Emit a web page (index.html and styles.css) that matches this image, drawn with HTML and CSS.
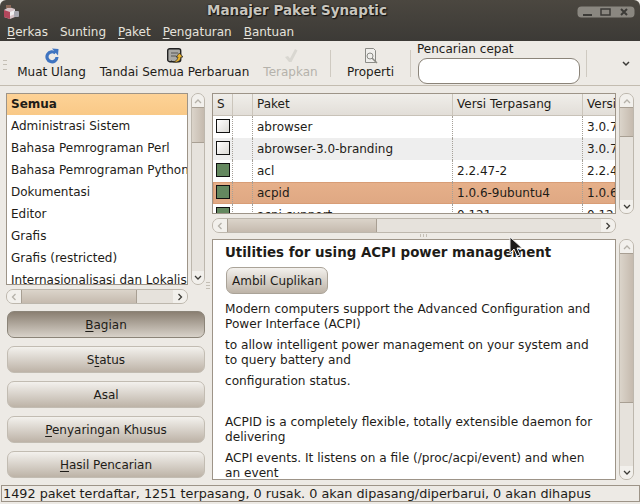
FILE: index.html
```html
<!DOCTYPE html>
<html lang="en">
<head>
<meta charset="UTF-8">
<meta name="viewport" content="width=device-width, initial-scale=1.0">
<title>Manajer Paket Synaptic</title>
<link rel="stylesheet" href="styles.css">
</head>
<body>
<header class="chrome">
  <div class="titlebar">
    <svg class="app-icon" width="16" height="14" viewBox="0 0 16 14">
      <path d="M1 5l5-3 6 2v8l-5 2-6-2z" fill="#d8c4c8"/>
      <path d="M1 5l6 2v7l-6-2z" fill="#b4475c"/>
      <path d="M7 7l5-2v4l-5 2z" fill="#f0eef0"/>
      <rect x="3" y="0" width="5" height="3" fill="#8d6a5a"/>
      <rect x="11" y="6" width="5" height="6" rx="1" fill="#a8a8b0"/>
    </svg>
    <h1 class="title">Manajer Paket Synaptic</h1>
    <div class="wm-buttons">
      <svg width="58" height="12" viewBox="0 0 58 12">
        <rect x="0.5" y="0.5" width="57" height="11" rx="4" fill="#8a8780"/>
        <path d="M6 9h9" stroke="#3c3b37" stroke-width="2"/>
        <rect x="24" y="3" width="9" height="6" fill="none" stroke="#3c3b37" stroke-width="1.5"/>
        <path d="M44 3l6 6M50 3l-6 6" stroke="#3c3b37" stroke-width="2"/>
      </svg>
    </div>
  </div>
  <nav class="menubar">
    <span><u>B</u>erkas</span>
    <span>Sunting</span>
    <span><u>P</u>aket</span>
    <span><u>P</u>engaturan</span>
    <span><u>B</u>antuan</span>
  </nav>
</header>

<div class="toolbar">
  <div class="grip"></div>
  <div class="tool tool-reload">
    <svg width="16" height="16" viewBox="0 0 16 16">
      <path d="M11.500 5.200A5 5 0 1 0 13 9" fill="none" stroke="#3f74c0" stroke-width="3.200"/>
      <path d="M8 0.500l6.500 0.500-0.500 6.500z" fill="#3f74c0"/>
    </svg>
    <span>Muat Ulang</span>
  </div>
  <div class="tool tool-mark">
    <svg width="16" height="16" viewBox="0 0 16 16">
      <rect x="0.700" y="0.700" width="13" height="13" rx="2" fill="#a8a8a4" stroke="#222" stroke-width="1.400"/>
      <path d="M4 8h5M4 5h7" stroke="#555" stroke-width="1"/>
      <path d="M4 13c3 1.500 6 .5 7-4h-2l3.500-4 3.500 4h-2c-.5 4-4 7-10 4z" fill="#e9b32e" stroke="#222" stroke-width=".7"/>
    </svg>
    <span>Tandai Semua Perbaruan</span>
  </div>
  <div class="tool tool-apply is-disabled">
    <svg width="16" height="16" viewBox="0 0 16 16">
      <path d="M2 9l3-1 2 2.500L12 1l2.500 1.500-6 11.500H6z" fill="#d9d7d1"/>
    </svg>
    <span>Terapkan</span>
  </div>
  <div class="sep"></div>
  <div class="tool tool-props">
    <svg width="16" height="16" viewBox="0 0 16 16" fill="none" stroke="#8b8b86">
      <path d="M2.500 0.500h8l2 2v12h-10z" fill="#f0efec"/>
      <circle cx="7" cy="8" r="3"/>
      <path d="M9 10l5 5" stroke-width="1.500"/>
    </svg>
    <span>Properti</span>
  </div>
  <div class="sep"></div>
  <div class="search">
    <label>Pencarian cepat</label>
    <input class="search-input" type="text">
  </div>
  <div class="sep sep-last"></div>
  <svg class="overflow" width="8" height="6" viewBox="0 0 8 6"><path d="M1 1l3 3 3-3" fill="none" stroke="#3c3b37" stroke-width="1.500"/></svg>
</div>

<main class="panes">
  <aside class="left">
    <div class="list-wrap">
      <ul class="filter-list">
        <li class="selected">Semua</li>
        <li>Administrasi Sistem</li>
        <li>Bahasa Pemrograman Perl</li>
        <li>Bahasa Pemrograman Python</li>
        <li>Dokumentasi</li>
        <li>Editor</li>
        <li>Grafis</li>
        <li>Grafis (restricted)</li>
        <li>Internasionalisasi dan Lokalisasi</li>
      </ul>
      <div class="vscroll">
        <div class="arrow"><svg width="8" height="6" viewBox="0 0 8 6"><path d="M1 5l3-3 3 3" fill="none" stroke="#b5b1a9" stroke-width="1.300"/></svg></div>
        <div class="track"><div class="thumb thumb-list"></div></div>
        <div class="arrow arrow-down"><svg width="8" height="6" viewBox="0 0 8 6"><path d="M1 1l3 3 3-3" fill="none" stroke="#3c3b37" stroke-width="1.300"/></svg></div>
      </div>
    </div>
    <div class="hscroll hscroll-left">
      <div class="harrow"><svg width="6" height="8" viewBox="0 0 6 8"><path d="M4.500 1L1.500 4l3 3" fill="none" stroke="#b5b1a9" stroke-width="1.300"/></svg></div>
      <div class="htrack"><div class="hthumb hthumb-left"></div></div>
      <div class="harrow"><svg width="6" height="8" viewBox="0 0 6 8"><path d="M1.500 1l3 3-3 3" fill="none" stroke="#3c3b37" stroke-width="1.300"/></svg></div>
    </div>
    <div class="filters">
      <button class="filter active"><u>B</u>agian</button>
      <button class="filter">S<u>t</u>atus</button>
      <button class="filter">Asal</button>
      <button class="filter"><u>P</u>enyaringan Khusus</button>
      <button class="filter"><u>H</u>asil Pencarian</button>
    </div>
    <div class="pane-grip"></div>
  </aside>

  <section class="right">
    <div class="pkg-wrap">
      <div class="pkg-table">
        <div class="row head">
          <div>S</div><div></div><div>Paket</div><div>Versi Terpasang</div><div>Versi</div>
        </div>
        <div class="row">
          <div><i class="box"></i></div><div></div><div>abrowser</div><div></div><div>3.0.7</div>
        </div>
        <div class="row alt">
          <div><i class="box"></i></div><div></div><div>abrowser-3.0-branding</div><div></div><div>3.0.7</div>
        </div>
        <div class="row">
          <div><i class="box on"></i></div><div></div><div>acl</div><div>2.2.47-2</div><div>2.2.47</div>
        </div>
        <div class="row picked">
          <div><i class="box on"></i></div><div></div><div>acpid</div><div>1.0.6-9ubuntu4</div><div>1.0.6</div>
        </div>
        <div class="row">
          <div><i class="box on"></i></div><div></div><div>acpi-support</div><div>0.121</div><div>0.121</div>
        </div>
      </div>
      <div class="vscroll">
        <div class="arrow"><svg width="8" height="6" viewBox="0 0 8 6"><path d="M1 5l3-3 3 3" fill="none" stroke="#b5b1a9" stroke-width="1.300"/></svg></div>
        <div class="track"><div class="thumb thumb-pkg"></div></div>
        <div class="arrow arrow-down"><svg width="8" height="6" viewBox="0 0 8 6"><path d="M1 1l3 3 3-3" fill="none" stroke="#3c3b37" stroke-width="1.300"/></svg></div>
      </div>
    </div>
    <div class="hscroll hscroll-right">
      <div class="harrow"><svg width="6" height="8" viewBox="0 0 6 8"><path d="M4.500 1L1.500 4l3 3" fill="none" stroke="#b5b1a9" stroke-width="1.300"/></svg></div>
      <div class="htrack"><div class="hthumb hthumb-right"></div></div>
      <div class="harrow"><svg width="6" height="8" viewBox="0 0 6 8"><path d="M1.500 1l3 3-3 3" fill="none" stroke="#3c3b37" stroke-width="1.300"/></svg></div>
    </div>
    <div class="handle"></div>
    <div class="detail-wrap">
      <article class="detail">
        <h2>Utilities for using ACPI power management</h2>
        <button class="shots">Ambil Cuplikan</button>
        <p>Modern computers support the Advanced Configuration and Power Interface (ACPI)</p>
        <p>to allow intelligent power management on your system and to query battery and</p>
        <p>configuration status.</p>
        <p class="gap">ACPID is a completely flexible, totally extensible daemon for delivering</p>
        <p>ACPI events. It listens on a file (/proc/acpi/event) and when an event</p>
      </article>
      <div class="vscroll">
        <div class="arrow"><svg width="8" height="6" viewBox="0 0 8 6"><path d="M1 5l3-3 3 3" fill="none" stroke="#b5b1a9" stroke-width="1.300"/></svg></div>
        <div class="track"><div class="thumb thumb-detail"></div></div>
        <div class="arrow arrow-down"><svg width="8" height="6" viewBox="0 0 8 6"><path d="M1 1l3 3 3-3" fill="none" stroke="#3c3b37" stroke-width="1.300"/></svg></div>
      </div>
    </div>
  </section>
</main>

<footer class="status">1492 paket terdaftar, 1251 terpasang, 0 rusak. 0 akan dipasang/diperbarui, 0 akan dihapus</footer>

<svg class="cursor" width="14" height="22" viewBox="0 0 14 22">
  <path d="M1 1v16l4-4 3 7 3-1-3-7h5z" fill="#1a1a1a" stroke="#eeeeee" stroke-width="1"/>
</svg>
</body>
</html>
```

FILE: styles.css
```css
html, body {
  margin: 0;
  padding: 0;
  height: 504px;
  overflow: hidden;
}
body {
  position: relative;
  width: 640px;
  background-color: #edeae5;
  font-family: "DejaVu Sans", sans-serif;
  font-size: 12px;
  color: #1e1c18;
  display: flex;
  flex-direction: column;
}
u {
  text-underline-offset: 2px;
}

/* window title and menu */
.chrome {
  height: 41px;
  background: linear-gradient(#4b4740, #3c3a36);
  border-radius: 6px 6px 0 0;
  flex: none;
}
.titlebar {
  height: 21px;
  display: flex;
  align-items: center;
  position: relative;
}
.app-icon {
  margin-left: 3px;
  margin-top: 3px;
}
.title {
  position: absolute;
  left: 0;
  right: 46px;
  top: 2px;
  margin: 0;
  text-align: center;
  font-size: 13.5px;
  font-weight: bold;
  color: #c8c5bd;
  text-shadow: 0 0 2px #111, 1px 1px 1px #111;
}
.wm-buttons {
  position: absolute;
  right: 5px;
  top: 6px;
  line-height: 0;
}
.menubar {
  height: 18px;
  padding: 2px 0 0 7px;
  display: flex;
  align-items: center;
  gap: 12px;
  color: #e6e3dc;
}

/* toolbar */
.toolbar {
  height: 44px;
  flex: none;
  display: flex;
  border-bottom: 1px solid #c3bcb0;
  box-sizing: content-box;
  position: relative;
}
.grip {
  width: 4px;
  height: 8px;
  margin: 19px 0 0 3px;
  border-top: 1px solid #c4bfb5;
  border-bottom: 1px solid #c4bfb5;
  background: linear-gradient(transparent 3px, #c4bfb5 3px, #c4bfb5 4px, transparent 4px);
}
.tool {
  display: flex;
  flex-direction: column;
  align-items: center;
  padding-top: 7px;
  gap: 1px;
  white-space: nowrap;
  flex: none;
}
.tool svg {
  display: block;
}
.tool span {
  line-height: 15px;
}
.tool-reload { width: 69px; margin-left: 10px; }
.tool-mark { width: 149px; margin-left: 14px; }
.tool-apply { width: 53px; margin-left: 15px; }
.tool-props { width: 47px; margin-left: 16px; }
.is-disabled { color: #b5b2ab; }
.sep {
  width: 1px;
  height: 27px;
  margin: 9px 0 0 0;
  background-color: #cfcac1;
  flex: none;
}
.tool-apply + .sep { margin-left: 13px; }
.tool-props + .sep { margin-left: 16px; }
.search {
  width: 164px;
  margin-left: 6px;
  flex: none;
}
.search label {
  display: block;
  line-height: 15px;
  margin-top: 1px;
}
.search-input {
  display: block;
  box-sizing: border-box;
  width: 162px;
  height: 26px;
  margin: 1px 0 0 1px;
  background: #ffffff;
  border: 1px solid #8b8479;
  border-radius: 9px;
  padding: 0;
}
.sep-last { margin-left: 5px; }
.overflow {
  margin: 20px 0 0 35px;
}

/* main panes */
.panes {
  flex: 1;
  display: flex;
  padding: 7px 6px 5px 6px;
  gap: 7px;
  min-height: 0;
}
.left {
  width: 199px;
  flex: none;
  display: flex;
  flex-direction: column;
  position: relative;
}
.pane-grip {
  position: absolute;
  right: -5px;
  top: 189px;
  width: 4px;
  height: 7px;
  background: repeating-linear-gradient(#c4bfb5 0 1px, transparent 1px 3px);
}
.right {
  flex: 1;
  min-width: 0;
  display: flex;
  flex-direction: column;
}
.list-wrap {
  height: 192px;
  display: flex;
  gap: 3px;
  flex: none;
}
.filter-list {
  flex: 1;
  min-width: 0;
  margin: 0;
  padding: 0;
  list-style: none;
  background: #ffffff;
  border: 1px solid #9d9488;
  overflow: hidden;
}
.filter-list li {
  height: 22px;
  line-height: 22px;
  padding-left: 4px;
  white-space: nowrap;
}
.filter-list .selected {
  height: 21px;
  line-height: 20px;
  font-weight: bold;
  background: linear-gradient(#fdd296, #f9c987);
}

/* scrollbars */
.vscroll {
  width: 14px;
  flex: none;
  box-sizing: border-box;
  border: 1px solid #bdb7ad;
  border-radius: 7px;
  background-color: #e6e2dc;
  display: flex;
  flex-direction: column;
  overflow: hidden;
}
.right .vscroll {
  width: 15px;
}
.arrow {
  height: 13px;
  flex: none;
  background: #f2f0ec;
  display: flex;
  align-items: center;
  justify-content: center;
}
.track {
  flex: 1;
  min-height: 0;
}
.thumb {
  background: linear-gradient(90deg, #dbd4ca, #c5baae);
  border: 1px solid #a89f93;
  border-width: 1px 0;
}
.thumb-list { height: 34px; }
.thumb-pkg { height: 28px; }
.thumb-detail { height: 148px; }

.hscroll {
  height: 15px;
  flex: none;
  box-sizing: border-box;
  border: 1px solid #bdb7ad;
  border-radius: 7px;
  background-color: #e6e2dc;
  display: flex;
  overflow: hidden;
}
.hscroll-left {
  margin-top: 4px;
  width: 182px;
}
.hscroll-right {
  margin: 4px 18px 0 0;
}
.harrow {
  width: 14px;
  flex: none;
  background: #f2f0ec;
  display: flex;
  align-items: center;
  justify-content: center;
}
.htrack {
  flex: 1;
  min-width: 0;
}
.hthumb {
  height: 100%;
  background: linear-gradient(#dbd4ca, #c5baae);
  border: 1px solid #a89f93;
  border-width: 0 1px;
  box-sizing: border-box;
}
.hthumb-left { width: 116px; }
.hthumb-right { width: 150px; }

/* filter buttons */
.filters {
  margin-top: 7px;
  display: flex;
  flex-direction: column;
  gap: 8px;
}
.filter {
  height: 27px;
  width: 198px;
  margin-left: 1px;
  font: inherit;
  color: inherit;
  border: 1px solid #c2bcb2;
  border-radius: 7px;
  background: linear-gradient(#f3f1ed, #bdb3a7);
  padding: 0;
}
.filter.active {
  background: linear-gradient(#8a7f72, #d8d2c9);
  border-color: #8b8478;
}

/* package table */
.pkg-wrap {
  height: 121px;
  flex: none;
  display: flex;
  gap: 3px;
}
.pkg-table {
  flex: 1;
  min-width: 0;
  background: #ffffff;
  border: 1px solid #9d9488;
  overflow: hidden;
}
.row {
  display: grid;
  grid-template-columns: 19px 20px 200px 130px 1fr;
  height: 22px;
  line-height: 22px;
  white-space: nowrap;
  box-sizing: border-box;
}
.row > div {
  padding-left: 4px;
  overflow: hidden;
  border-left: 1px dotted #a5a098;
  box-sizing: border-box;
}
.row > div:first-child {
  border-left: 0;
}
.row.head {
  background: linear-gradient(#f0eeea, #e2ded8);
  border-bottom: 1px solid #c8c2b8;
  line-height: 21px;
}
.row.head > div {
  border-left: 1px solid #cbc5bb;
}
.row.head > div:first-child {
  border-left: 0;
}
.row.alt {
  background-color: #eeeeee;
}
.row.picked {
  background: linear-gradient(#e6b08a, #dfa883);
  box-shadow: inset 0 0 0 1px #d89d76;
}
.box {
  display: block;
  width: 12px;
  height: 12px;
  margin: 3px 0 0 -1px;
  border: 1px solid #111;
  background: linear-gradient(135deg, #ffffff, #dcdad6);
}
.box.on {
  background: #64885f;
}

.handle {
  height: 7px;
  flex: none;
  margin-top: -1px;
  background: repeating-linear-gradient(90deg, #c4bfb5 0 1px, transparent 1px 3px) 208px 2px / 7px 3px no-repeat;
}
.detail-wrap {
  flex: 1;
  min-height: 0;
  display: flex;
  gap: 3px;
}
.detail {
  flex: 1;
  min-width: 0;
  background: #ffffff;
  border: 1px solid #9d9488;
  overflow: hidden;
  padding: 4px 20px 0 12px;
  box-sizing: border-box;
  font-size: 12.15px;
}
.detail h2 {
  margin: 0;
  font-size: 13.4px;
  line-height: 17px;
  font-weight: bold;
  white-space: nowrap;
}
.shots {
  display: block;
  width: 102px;
  height: 27px;
  margin: 6px 0 8px 1px;
  padding: 0;
  font: inherit;
  font-size: 12px;
  color: inherit;
  border: 1px solid #aaa398;
  border-radius: 7px;
  background: linear-gradient(#f3f1ed, #bdb3a7);
}
.detail p {
  margin: 6px 0 0;
  line-height: 15px;
}
.detail .shots + p {
  margin-top: 0;
}
.detail p.gap {
  margin-top: 26px;
}

.status {
  height: 17px;
  line-height: 16px;
  flex: none;
  box-sizing: border-box;
  border: 1px solid #9d9488;
  margin: 0 0 2px 1px;
  width: 639px;
  padding-left: 1px;
  font-size: 12.8px;
  white-space: nowrap;
  overflow: hidden;
}

.cursor {
  position: absolute;
  left: 509px;
  top: 236px;
}
```
